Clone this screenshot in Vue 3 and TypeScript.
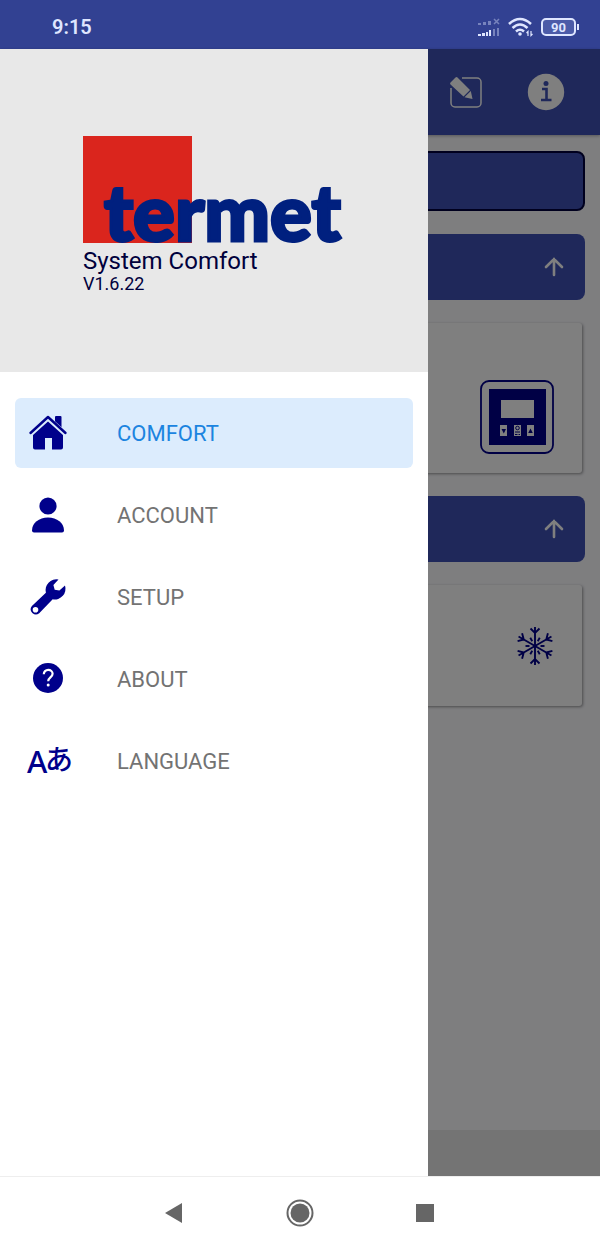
<script setup lang="ts">
import { ref } from 'vue'

type IconName = 'home' | 'user' | 'wrench' | 'help' | 'language'

interface MenuItem {
  id: string
  label: string
  icon: IconName
}

const items: MenuItem[] = [
  { id: 'comfort', label: 'COMFORT', icon: 'home' },
  { id: 'account', label: 'ACCOUNT', icon: 'user' },
  { id: 'setup', label: 'SETUP', icon: 'wrench' },
  { id: 'about', label: 'ABOUT', icon: 'help' },
  { id: 'language', label: 'LANGUAGE', icon: 'language' },
]

const active = ref('comfort')
</script>

<template>
  <div class="screen">
    <header class="status">
      <span class="clock">9:15</span>
      <span class="status-icons">
        <svg width="24" height="18" viewBox="0 0 24 18" fill="#dfe6ff" aria-hidden="true">
          <g opacity=".4">
            <path d="M1 5h3v2H1zM6 4h3v3H6zM11 3h3v4h-3z" />
            <path d="M17 1l5 5M22 1l-5 5" stroke="#dfe6ff" stroke-width="1.5" />
            <path d="M16 11h2v7h-2zM20 10h2v8h-2z" />
          </g>
          <path d="M1 16h3v2H1zM5 15h3v3H5zM9 14h2v4H9zM12 12h2v6h-2z" />
        </svg>
        <svg width="26" height="20" viewBox="0 0 26 20" fill="none" stroke="#dfe6ff" stroke-width="2.6" aria-hidden="true">
          <path d="M1 7q11-10 22 0M4.500 11q7.500-7 15 0M8 14.500q4-3.500 8 0" />
          <circle cx="12" cy="17" r="1.800" fill="#dfe6ff" stroke="none" />
          <path d="M20 19v-4.500l-1.500 1.500M23 14v4.500l1.500-1.500" stroke-width="1.200" />
        </svg>
        <span class="battery"><span class="level">90</span></span>
      </span>
    </header>

    <div class="stage">
      <main class="page">
        <div class="toolbar">
          <button class="tool" type="button" aria-label="Edit">
            <svg width="34" height="34" viewBox="0 0 34 34" aria-hidden="true">
              <path d="M13 3h15a4 4 0 0 1 4 4v21a4 4 0 0 1-4 4H6a4 4 0 0 1-4-4V13" fill="none" stroke="#fff" stroke-width="1.500" />
              <path d="M1.500 7.500l5-5a1.500 1.500 0 0 1 2 0L21 15l-6.500 6.500L1.500 9.500a1.500 1.500 0 0 1 0-2zM21.800 16l1.700 8-8-1.800z" fill="#fff" />
            </svg>
          </button>
          <button class="tool" type="button" aria-label="Information">
            <svg width="38" height="38" viewBox="0 0 38 38" aria-hidden="true">
              <circle cx="19" cy="19" r="18.200" fill="#fff" />
              <circle cx="19" cy="10.500" r="2.500" fill="#3f51b5" />
              <path d="M15 16h4.500v11M14 27h10.500" fill="none" stroke="#3f51b5" stroke-width="2.600" />
            </svg>
          </button>
        </div>
        <div class="content">
          <button class="bar outlined" type="button" aria-label="Installation"></button>
          <button class="bar" type="button" aria-label="Collapse controllers">
            <svg class="arrow" width="20" height="20" viewBox="0 0 20 20" aria-hidden="true">
              <path d="M10 18V2M2 10l8-8 8 8" />
            </svg>
          </button>
          <section class="card tall">
            <svg width="74" height="74" viewBox="0 0 74 74" aria-hidden="true">
              <rect x="1" y="1" width="72" height="72" rx="8" fill="none" stroke="#00008b" stroke-width="1.800" />
              <path d="M9 9h57v56H9z" fill="#00008b" />
              <path d="M21 20h33v18H21zM20 45h7v11h-7zM34 45h7v11h-7zM47 45h7v11h-7z" fill="#fff" />
              <path d="M21.500 49h4.500l-2.200 4.500zM48.200 53h4.600l-2.300-4.500z" fill="#00008b" />
              <circle cx="37.500" cy="48" r="1.800" fill="none" stroke="#00008b" />
              <path d="M35 52h5M35 54.500h2.500M38.500 54.500h1.500" stroke="#00008b" />
            </svg>
          </section>
          <button class="bar" type="button" aria-label="Collapse heating">
            <svg class="arrow" width="20" height="20" viewBox="0 0 20 20" aria-hidden="true">
              <path d="M10 18V2M2 10l8-8 8 8" />
            </svg>
          </button>
          <section class="card">
            <svg width="38" height="40" viewBox="-19 -20 38 40" fill="none" stroke="#00008b" stroke-width="1.900" aria-hidden="true">
              <g v-for="angle in [0, 60, 120, 180, 240, 300]" :key="angle" :transform="`rotate(${angle})`">
                <path d="M0 0v-19M-4.500-17.500l4.500 4.500 4.500-4.500" />
                <path d="M0-5.500v-4" transform="rotate(30)" />
              </g>
            </svg>
          </section>
        </div>
        <footer class="page-footer"></footer>
      </main>
      <div class="scrim"></div>

      <aside class="drawer">
        <div class="brand">
          <svg class="logo" width="260" height="108" viewBox="0 0 260 108" role="img" aria-label="termet">
            <path d="M0 0h109v107H0z" fill="#da251d" />
            <text x="21" y="105" class="wordmark">termet</text>
          </svg>
          <h1>System Comfort</h1>
          <p>V1.6.22</p>
        </div>
        <nav class="menu">
          <a
            v-for="item in items"
            :key="item.id"
            :href="`#${item.id}`"
            class="item"
            :class="{ active: item.id === active }"
            @click.prevent="active = item.id"
          >
            <svg class="icon" width="42" height="42" viewBox="0 0 42 42" fill="#00008b" aria-hidden="true">
              <template v-if="item.icon === 'home'">
                <path d="M21 9.500l15 13.500v12.500a2 2 0 0 1-2 2h-9V26h-7v11.500H8a2 2 0 0 1-2-2V23z" />
                <path d="M3.500 21L21 5l17.500 16" fill="none" stroke="#dcecfd" stroke-width="5" />
                <path d="M28 5a1 1 0 0 1 1-1h4.500a1 1 0 0 1 1 1v10.200L28 9.200z" />
                <path d="M3.500 21L21 5l17.500 16" fill="none" stroke="#00008b" stroke-width="2.400" stroke-linecap="round" stroke-linejoin="round" />
              </template>
              <template v-else-if="item.icon === 'user'">
                <circle cx="21" cy="12" r="8.600" />
                <path d="M5 36.500C5 29 12 23.500 21 23.500S37 29 37 36.500a2 2 0 0 1-2 2H7a2 2 0 0 1-2-2z" />
              </template>
              <template v-else-if="item.icon === 'wrench'">
                <path d="M31.500 3.500A10.800 10.800 0 0 0 18.900 16.700L4.900 30a5.200 5.200 0 0 0 7.300 7.300l13.500-14A10.800 10.800 0 0 0 38 9.400l-5.600 5.100-4.700-.800-1.300-4.800zM8.500 31a2.800 2.800 0 1 1 0 5.600 2.800 2.800 0 0 1 0-5.600z" fill-rule="evenodd" />
              </template>
              <template v-else-if="item.icon === 'help'">
                <circle cx="21" cy="20" r="15" />
                <path d="M16.800 16.300c0-2.700 1.900-4.400 4.400-4.400s4.400 1.600 4.400 3.900c0 3.500-4.400 3.800-4.400 7.400" fill="none" stroke="#fff" stroke-width="2.200" />
                <circle cx="21.200" cy="27" r="1.500" fill="#fff" />
              </template>
              <template v-else>
                <text x="0" y="33" class="latin">A</text>
                <text x="18" y="30" class="kana">あ</text>
              </template>
            </svg>
            <span>{{ item.label }}</span>
          </a>
        </nav>
      </aside>
    </div>

    <nav class="system-nav">
      <button type="button" aria-label="Back">
        <svg width="28" height="28" viewBox="0 0 28 28" aria-hidden="true"><path d="M5 14L22 4v20z" fill="#666" /></svg>
      </button>
      <button type="button" aria-label="Home">
        <svg width="28" height="28" viewBox="0 0 28 28" aria-hidden="true">
          <circle cx="14" cy="14" r="12.500" fill="none" stroke="#666" stroke-width="2" />
          <circle cx="14" cy="14" r="9.500" fill="#666" />
        </svg>
      </button>
      <button type="button" aria-label="Recent apps">
        <svg width="28" height="28" viewBox="0 0 28 28" aria-hidden="true"><path d="M4 5h18v18H4z" fill="#666" /></svg>
      </button>
    </nav>
  </div>
</template>

<style>
body {
  margin: 0;
}
</style>

<style scoped>
.screen {
  display: flex;
  flex-direction: column;
  min-height: 100vh;
  font-family: Roboto, "Noto Sans CJK JP", sans-serif;
  background: #fff;
}

.screen * {
  box-sizing: border-box;
}

svg {
  display: block;
  overflow: visible;
}

button {
  margin: 0;
  padding: 0;
  border: 0;
  background: none;
}

.status {
  display: flex;
  align-items: center;
  justify-content: space-between;
  height: 49px;
  padding: 4px 21px 0 52px;
  background: #324192;
  color: #dfe6ff;
}

.clock {
  font-size: 20px;
  font-weight: 600;
}

.status-icons {
  display: flex;
  align-items: center;
  gap: 7px;
}

.battery {
  display: flex;
  align-items: center;
}

.battery::after {
  content: "";
  width: 2px;
  height: 6px;
  margin-left: 1px;
  background: #dfe6ff;
}

.level {
  width: 35px;
  height: 18px;
  border: 2px solid #dfe6ff;
  border-radius: 5px;
  background: #4c5ba8;
  font-size: 13px;
  font-weight: 700;
  line-height: 15px;
  text-align: center;
}

.stage {
  position: relative;
  display: flex;
  flex: 1;
}

.page {
  display: flex;
  flex: 1;
  flex-direction: column;
  background: #fcfcff;
}

.toolbar {
  display: flex;
  align-items: center;
  justify-content: flex-end;
  gap: 44px;
  height: 86px;
  padding-right: 35px;
  background: #3f51b5;
  box-shadow: 0 1px 3px rgba(0, 0, 0, 0.3);
}

.content {
  display: flex;
  flex: 1;
  flex-direction: column;
  gap: 23px;
  padding: 16px 15px;
}

.bar {
  display: flex;
  align-items: center;
  justify-content: flex-end;
  height: 66px;
  padding-right: 21px;
  border-radius: 8px;
  background: #3f51b5;
}

.outlined {
  height: 60px;
  border: 2px solid #00003c;
}

.arrow {
  fill: none;
  stroke: #fff;
  stroke-width: 2.6;
  stroke-linecap: round;
}

.card {
  display: flex;
  align-items: center;
  justify-content: flex-end;
  height: 121px;
  margin-right: 3px;
  padding-right: 28px;
  border-radius: 3px;
  background: #fff;
  box-shadow: 1px 1px 3px rgba(0, 0, 0, 0.4);
}

.tall {
  height: 150px;
  align-items: flex-end;
  padding-bottom: 19px;
}

.page-footer {
  height: 46px;
  background: #e8e8e8;
}

.scrim {
  position: absolute;
  inset: 0;
  background: rgba(0, 0, 0, 0.5);
}

.drawer {
  position: absolute;
  inset: 0 auto 0 0;
  width: min(428px, 80vw);
  background: #fff;
}

.brand {
  padding: 87px 83px 79px;
  background: #e8e8e8;
  color: #00003c;
}

.wordmark {
  fill: #00207f;
  stroke: #00207f;
  stroke-width: 3px;
  font-family: Lato, sans-serif;
  font-size: 78px;
  font-weight: 900;
}

h1 {
  margin: 4px 0 0;
  font-size: 24px;
  font-weight: 400;
  line-height: 27px;
}

.brand p {
  margin: 0;
  font-size: 18px;
  line-height: 18px;
}

.menu {
  display: flex;
  flex-direction: column;
  gap: 12px;
  padding: 26px 15px;
}

.item {
  display: flex;
  align-items: center;
  gap: 48px;
  height: 70px;
  padding-left: 12px;
  border-radius: 6px;
  color: #737373;
  font-size: 22px;
  text-decoration: none;
}

.active {
  background: #dcecfd;
  color: #1b84e0;
}

.latin {
  font-family: "Noto Sans", sans-serif;
  font-size: 31px;
  font-weight: 500;
}

.kana {
  font-family: "Noto Sans CJK JP", sans-serif;
  font-size: 28px;
  font-weight: 500;
}

.system-nav {
  display: flex;
  align-items: center;
  justify-content: center;
  gap: 98px;
  height: 73px;
  border-top: 1px solid #eee;
}
</style>
